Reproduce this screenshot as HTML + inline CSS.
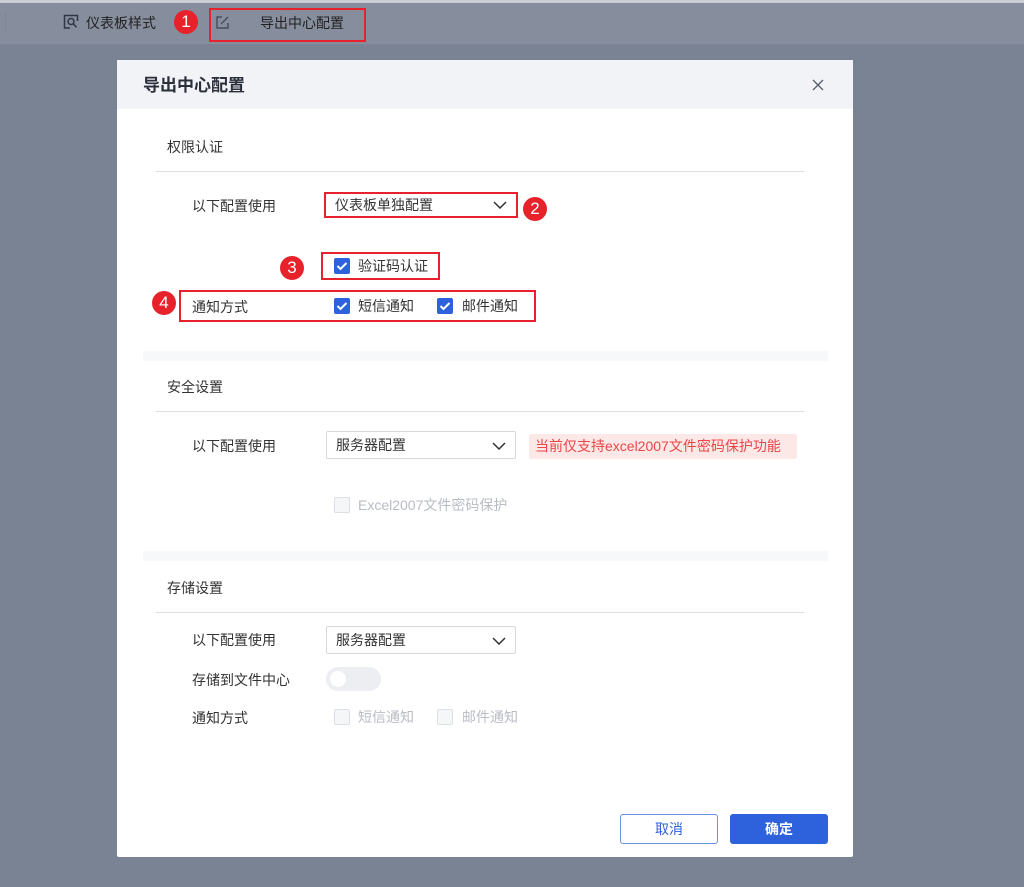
<!DOCTYPE html>
<html><head><meta charset="utf-8"><style>
*{margin:0;padding:0;box-sizing:border-box}
body{width:1024px;height:887px;background:#7a8394;position:relative;overflow:hidden;font-family:"Liberation Sans","Noto Sans CJK SC",sans-serif;font-size:14px;color:#333}
.a{position:absolute}
.top{left:0;top:0;width:1024px;height:45px;background:#868e9d;border-top:3px solid #c9cdd4;border-bottom:1px solid #7d8596}
.red{border:2px solid #e8222b}
.num{width:24px;height:24px;border-radius:50%;background:#e8222b;color:#fff;font-size:17px;text-align:center;line-height:24px;font-family:"Liberation Sans",sans-serif}
.dlg{left:117px;top:60px;width:736px;height:797px;background:#fff;border-radius:2px}
.hd{left:0;top:0;width:736px;height:49px;background:#f2f3f7}
.t{white-space:nowrap;line-height:18px}
.line{height:1px;background:#dcdfe4;left:39px;width:648px}
.sep{left:26px;width:685px;height:10px;background:#f7f8fa}
.sel{width:190px;height:28px;border:1px solid #d6d9de;border-radius:2px;padding-left:9px;line-height:27px;font-size:14px}
.sel svg{position:absolute;right:9px;top:10px}
.cb{width:16px;height:16px;border-radius:2px;background:#2d62dc}
.cb.off{background:#f5f6f8;border:1px solid #dcdfe4}
.btn{width:98px;height:30px;border-radius:3px;text-align:center;line-height:28px;font-size:14px}
</style></head><body>
<div class="a top"></div>
<div class="a" style="left:5px;top:12px;width:1px;height:22px;background:#7d8596"></div>
<svg class="a" style="left:63px;top:14px" width="16" height="16" viewBox="0 0 16 16" fill="none" stroke="#2f3645" stroke-width="1.5"><path d="M7 14H1.5V1.5h13V7"/><circle cx="8" cy="7.5" r="3"/><path d="M10.2 9.8l3.3 3.5"/></svg>
<div class="a t" style="left:86px;top:14px;color:#222">仪表板样式</div>
<div class="a num" style="left:174px;top:10px">1</div>
<div class="a red" style="left:209px;top:8px;width:157px;height:34px"></div>
<svg class="a" style="left:216px;top:16px" width="13" height="13" viewBox="0 0 13 13" fill="none" stroke="#3a4150" stroke-width="1.2"><path d="M6 1H1v11h11V7"/><path d="M5 8l7-7"/></svg>
<div class="a t" style="left:260px;top:14px;color:#222">导出中心配置</div>

<div class="a dlg">
<div class="a hd"></div>
<div class="a t" style="left:26px;top:16px;font-size:17px;line-height:20px;font-weight:bold;color:#2a2f3a">导出中心配置</div>
<svg class="a" style="left:695px;top:19px" width="12" height="12" viewBox="0 0 12 12" stroke="#555c6b" stroke-width="1.3"><path d="M1 1l10 10M11 1L1 11"/></svg>

<div class="a t" style="left:50px;top:78px">权限认证</div>
<div class="a line" style="top:111px"></div>
<div class="a t" style="left:75px;top:137px">以下配置使用</div>
<div class="a sel" style="left:209px;top:133px;height:24px;line-height:24px;border:none">仪表板单独配置<svg width="14" height="8" viewBox="0 0 14 8" fill="none" stroke="#333" stroke-width="1.5" style="top:8px"><path d="M1 1l6 6 6-6"/></svg></div>
<div class="a red" style="left:207px;top:132px;width:194px;height:26px"></div>
<div class="a num" style="left:406px;top:137px">2</div>
<div class="a num" style="left:163px;top:196px">3</div>
<div class="a red" style="left:204px;top:192px;width:119px;height:28px"></div>
<div class="a cb" style="left:217px;top:198px"></div>
<svg class="a" style="left:217px;top:198px" width="16" height="16"><path d="M3.5 8l3 3 6-6" fill="none" stroke="#fff" stroke-width="2"/></svg>
<div class="a t" style="left:241px;top:197px">验证码认证</div>
<div class="a num" style="left:35px;top:231px">4</div>
<div class="a red" style="left:62px;top:230px;width:357px;height:32px"></div>
<div class="a t" style="left:75px;top:238px">通知方式</div>
<div class="a cb" style="left:217px;top:238px"></div>
<svg class="a" style="left:217px;top:238px" width="16" height="16"><path d="M3.5 8l3 3 6-6" fill="none" stroke="#fff" stroke-width="2"/></svg>
<div class="a t" style="left:241px;top:237px">短信通知</div>
<div class="a cb" style="left:320px;top:238px"></div>
<svg class="a" style="left:320px;top:238px" width="16" height="16"><path d="M3.5 8l3 3 6-6" fill="none" stroke="#fff" stroke-width="2"/></svg>
<div class="a t" style="left:345px;top:237px">邮件通知</div>

<div class="a sep" style="top:291px"></div>
<div class="a t" style="left:50px;top:318px">安全设置</div>
<div class="a line" style="top:351px"></div>
<div class="a t" style="left:75px;top:377px">以下配置使用</div>
<div class="a sel" style="left:209px;top:371px">服务器配置<svg width="14" height="8" viewBox="0 0 14 8" fill="none" stroke="#333" stroke-width="1.5"><path d="M1 1l6 6 6-6"/></svg></div>
<div class="a t" style="left:412px;top:374px;width:268px;height:25px;background:#fde8e8;color:#ec4545;line-height:25px;padding-left:6px;border-radius:2px">当前仅支持excel2007文件密码保护功能</div>
<div class="a cb off" style="left:217px;top:437px"></div>
<div class="a t" style="left:241px;top:436px;color:#b8bcc4">Excel2007文件密码保护</div>

<div class="a sep" style="top:491px"></div>
<div class="a t" style="left:50px;top:519px">存储设置</div>
<div class="a line" style="top:552px"></div>
<div class="a t" style="left:75px;top:571px">以下配置使用</div>
<div class="a sel" style="left:209px;top:566px">服务器配置<svg width="14" height="8" viewBox="0 0 14 8" fill="none" stroke="#333" stroke-width="1.5"><path d="M1 1l6 6 6-6"/></svg></div>
<div class="a t" style="left:75px;top:611px">存储到文件中心</div>
<div class="a" style="left:209px;top:607px;width:55px;height:24px;border-radius:12px;background:#eceef1"></div>
<div class="a" style="left:213px;top:611px;width:16px;height:16px;border-radius:50%;background:#fff"></div>
<div class="a t" style="left:75px;top:649px">通知方式</div>
<div class="a cb off" style="left:217px;top:649px"></div>
<div class="a t" style="left:241px;top:648px;color:#b8bcc4">短信通知</div>
<div class="a cb off" style="left:320px;top:649px"></div>
<div class="a t" style="left:345px;top:648px;color:#b8bcc4">邮件通知</div>

<div class="a btn" style="left:503px;top:754px;border:1px solid #6a8fe6;color:#2d62dc">取消</div>
<div class="a btn" style="left:613px;top:754px;background:#2d62dc;color:#fff;font-weight:bold;border:1px solid #2d62dc">确定</div>
</div>
</body></html>
